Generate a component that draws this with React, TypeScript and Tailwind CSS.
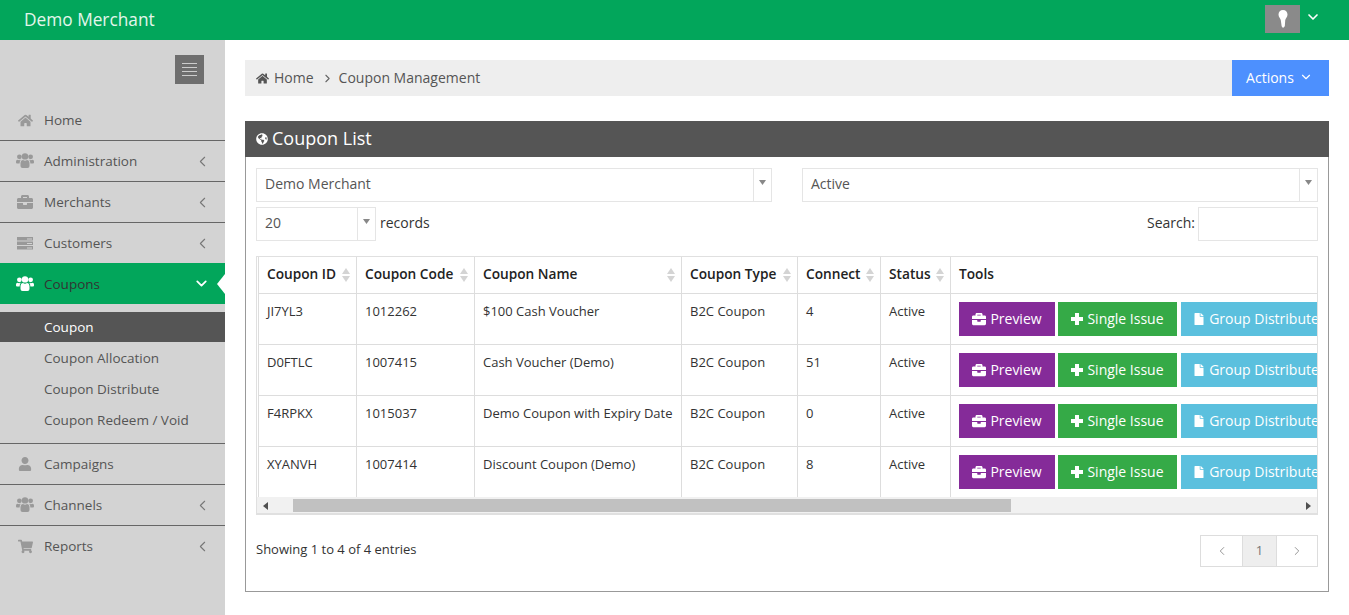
import { ReactNode } from 'react';
import { ChevronDown, ChevronLeft, ChevronRight } from 'lucide-react';
import { FaBriefcase, FaFile, FaGlobeAmericas, FaHome, FaShoppingCart, FaUser } from 'react-icons/fa';

const coupons = [
  { id: 'JI7YL3', code: '1012262', name: '$100 Cash Voucher', connect: '4' },
  { id: 'D0FTLC', code: '1007415', name: 'Cash Voucher (Demo)', connect: '51' },
  { id: 'F4RPKX', code: '1015037', name: 'Demo Coupon with Expiry Date', connect: '0' },
  { id: 'XYANVH', code: '1007414', name: 'Discount Coupon (Demo)', connect: '8' },
];

const columns = [
  { label: 'Coupon ID', width: 'w-[98px]' },
  { label: 'Coupon Code', width: 'w-[118px]' },
  { label: 'Coupon Name', width: 'w-[207px]' },
  { label: 'Coupon Type', width: 'w-[116px]' },
  { label: 'Connect', width: 'w-[83px]' },
  { label: 'Status', width: 'w-[70px]' },
];

function UsersIcon() {
  return (
    <svg width="18" height="16" viewBox="0 0 18 16" fill="currentColor">
      <circle cx="3.4" cy="3.8" r="2.4" />
      <circle cx="14.6" cy="3.8" r="2.4" />
      <circle cx="9" cy="3.4" r="3.2" />
      <path d="M4.500 10.500C4.500 8 5.700 7 7 7Q9 8.500 11 7C12.300 7 13.500 8 13.500 10.500V13Q13.500 15 11.500 15H6.500Q4.500 15 4.500 13Z" />
      <path d="M0 8.500Q0 6.700 1.500 6.700 3 7.600 4.800 6.700 3.700 7.800 3.600 10.500H1Q0 10.500 0 9.500Z" />
      <path d="M18 8.500Q18 6.700 16.500 6.700 15 7.600 13.200 6.700 14.300 7.800 14.400 10.500H17Q18 10.500 18 9.500Z" />
    </svg>
  );
}

function RacksIcon() {
  return (
    <svg width="16" height="13" viewBox="0 0 16 13" fill="currentColor">
      <rect width="16" height="3.500" />
      <rect y="4.500" width="16" height="3.500" />
      <rect y="9" width="16" height="3.500" />
      <rect x="10" y="1.500" width="5" height="1" fill="#d3d3d3" />
      <rect x="10" y="6" width="5" height="1" fill="#d3d3d3" />
      <rect x="10" y="10.500" width="5" height="1" fill="#d3d3d3" />
    </svg>
  );
}

function NavItem({ icon, label, arrow = true }: { icon: ReactNode; label: string; arrow?: boolean }) {
  return (
    <div className="flex h-[41px] items-center border-b border-[#666] pl-[15px] pr-[14px] text-[13.5px] text-[#555]">
      <span className="mr-[9px] flex w-[20px] shrink-0 items-center justify-center text-[#999]">{icon}</span>
      <span className="flex-1">{label}</span>
      {arrow && <ChevronLeft className="h-[17px] w-[17px] text-[#777]" strokeWidth={1.5} />}
    </div>
  );
}

function SortArrows() {
  return (
    <svg width="8" height="16" viewBox="0 0 8 16" className="shrink-0 fill-[#d4d4d4]">
      <path d="M4 1 8 7H0Z" />
      <path d="M4 15 8 9H0Z" />
    </svg>
  );
}

function Caret() {
  return (
    <svg width="7" height="5" viewBox="0 0 7 5" className="fill-[#888]">
      <path d="M0 0h7L3.500 5Z" />
    </svg>
  );
}

function SelectBox({ value, className }: { value: string; className: string }) {
  return (
    <div className={`flex h-[34px] items-center border border-[#e5e5e5] text-[14px] text-[#555] ${className}`}>
      <span className="flex-1 pb-[3px] pl-[8px]">{value}</span>
      <span className="flex h-full w-[18px] items-center justify-center border-l border-[#e5e5e5] pb-[5px]">
        <Caret />
      </span>
    </div>
  );
}

function ToolButton({ color, icon, label }: { color: string; icon: ReactNode; label: string }) {
  return (
    <span className={`flex h-[34px] shrink-0 items-center justify-center gap-[4px] text-[14px] text-white ${color}`}>
      {icon}
      {label}
    </span>
  );
}

export default function App() {
  return (
    <div className="flex h-[615px] flex-col overflow-hidden bg-white font-['Open_Sans',sans-serif] text-[13px] text-[#333]">
      {/* Header */}
      <header className="flex h-10 shrink-0 items-center justify-between bg-[#02a65b] pl-[24px] pr-[28px]">
        <span className="pb-px text-[17.3px] text-[#e4f6ec]">Demo Merchant</span>
        <div className="flex items-center gap-[5px] pb-[2px]">
          <div className="flex h-[28px] w-[35px] items-center justify-center bg-[#8a8a8a]">
            <svg width="12" height="18" viewBox="0 0 12 20" className="fill-white">
              <path d="M6 0C9 0 11 2 11 5 11 8 9 9 8.500 11L8 18 6 20 4.500 18 3.500 11C3 9 1 8 1 5 1 2 3 0 6 0Z" />
            </svg>
          </div>
          <ChevronDown className="mb-[4px] h-[16px] w-[16px] text-white" strokeWidth={2.5} />
        </div>
      </header>

      <div className="flex min-h-0 flex-1">
        {/* Sidebar */}
        <aside className="w-[225px] shrink-0 bg-[#d3d3d3]">
          <div className="flex h-[60px] justify-end pr-[21px] pt-[15px]">
            <div className="flex h-[29px] w-[29px] flex-col items-center justify-center gap-[3px] bg-[#6e6e6e]">
              <span className="h-px w-[15px] bg-[#ccc]" />
              <span className="h-px w-[15px] bg-[#ccc]" />
              <span className="h-px w-[15px] bg-[#ccc]" />
              <span className="h-px w-[15px] bg-[#ccc]" />
            </div>
          </div>
          <NavItem icon={<FaHome size={15} />} label="Home" arrow={false} />
          <NavItem icon={<UsersIcon />} label="Administration" />
          <NavItem icon={<FaBriefcase size={16} />} label="Merchants" />
          <div className="flex h-[40px] items-center pl-[15px] pr-[14px] text-[13.5px] text-[#555]">
            <span className="mr-[9px] flex w-[20px] shrink-0 items-center justify-center text-[#999]">
              <RacksIcon />
            </span>
            <span className="flex-1">Customers</span>
            <ChevronLeft className="h-[17px] w-[17px] text-[#777]" strokeWidth={1.5} />
          </div>
          <div className="relative flex h-[41px] items-center bg-[#02a65b] pl-[15px] pr-[15px] text-[13.5px] text-[#333]">
            <span className="mr-[9px] flex w-[20px] shrink-0 items-center justify-center text-white">
              <UsersIcon />
            </span>
            <span className="flex-1 pt-px">Coupons</span>
            <ChevronDown className="h-[17px] w-[17px] text-white" strokeWidth={2.5} />
            <span className="absolute right-0 top-[11px] h-0 w-0 border-y-[10px] border-r-[8px] border-y-transparent border-r-white" />
          </div>
          <div className="border-b border-[#666] pb-[8px] pt-[8px] text-[13.5px] text-[#555]">
            <div className="flex h-[30px] items-center bg-[#555] pl-[44px] text-white">Coupon</div>
            <div className="flex h-[31px] items-center pl-[44px] pt-px">Coupon Allocation</div>
            <div className="flex h-[31px] items-center pl-[44px] pt-px">Coupon Distribute</div>
            <div className="flex h-[31px] items-center pl-[44px] pt-px">Coupon Redeem / Void</div>
          </div>
          <NavItem icon={<FaUser size={14} />} label="Campaigns" arrow={false} />
          <NavItem icon={<UsersIcon />} label="Channels" />
          <div className="flex h-[41px] items-center pb-px pl-[15px] pr-[14px] text-[13.5px] text-[#555]">
            <span className="mr-[9px] flex w-[20px] shrink-0 items-center justify-center text-[#999]">
              <FaShoppingCart size={15} />
            </span>
            <span className="flex-1">Reports</span>
            <ChevronLeft className="h-[17px] w-[17px] text-[#777]" strokeWidth={1.5} />
          </div>
        </aside>

        {/* Main */}
        <main className="min-w-0 flex-1 pl-[20px] pr-[20px] pt-[20px]">
          <div className="flex h-[36px] items-center bg-[#eeeeee] pl-[11px] text-[14px] text-[#555]">
            <FaHome size={13} className="mr-[5px]" />
            <span className="pb-[2px]">Home</span>
            <ChevronRight className="ml-[7px] mr-[5px] h-[13px] w-[13px] text-[#666]" strokeWidth={2} />
            <span className="flex-1 pb-[2px]">Coupon Management</span>
            <span className="flex h-full w-[97px] items-center justify-center gap-[5px] bg-[#4d90fe] pb-[2px] pr-[2px] text-white">
              Actions
              <ChevronDown className="h-[14px] w-[14px]" strokeWidth={2} />
            </span>
          </div>

          <section className="mt-[25px] h-[471px] border border-t-0 border-[#999]">
            <div className="-mx-px flex h-[36px] items-center gap-[4px] bg-[#555] pb-px pl-[11px] text-[18px] text-white">
              <FaGlobeAmericas size={12} />
              Coupon List
            </div>
            <div className="px-[10px] pt-[11px]">
              <div className="flex justify-between">
                <SelectBox value="Demo Merchant" className="w-[516px]" />
                <SelectBox value="Active" className="w-[516px]" />
              </div>
              <div className="mt-[5px] flex items-center justify-between text-[14px] text-[#333]">
                <div className="flex items-center gap-[4px]">
                  <SelectBox value="20" className="w-[120px]" />
                  <span className="pb-[3px]">records</span>
                </div>
                <div className="flex items-center gap-[3px]">
                  <span className="pb-[3px]">Search:</span>
                  <div className="h-[34px] w-[120px] border border-[#e5e5e5]" />
                </div>
              </div>

              <div className="mt-[15px] h-[259px] overflow-hidden border border-b-2 border-[#e0e0e0]">
                <div className="ml-px h-[240px] overflow-hidden">
                  <table className="w-[1300px] table-fixed border-collapse">
                    <thead>
                      <tr className="h-[36px] text-[13.7px] text-[#222]">
                        {columns.map((c) => (
                          <th
                            key={c.label}
                            className={`border border-t-0 border-[#ddd] pl-[8px] pr-[6px] text-left font-semibold ${c.width}`}
                          >
                            <span className="flex items-center justify-between">
                              {c.label}
                              <SortArrows />
                            </span>
                          </th>
                        ))}
                        <th className="border border-t-0 border-[#ddd] pl-[8px] text-left font-semibold">Tools</th>
                      </tr>
                    </thead>
                    <tbody>
                      {coupons.map((c) => (
                        <tr key={c.id} className="h-[51px] align-top">
                          <td className="border border-[#ddd] px-[8px] pt-[8px]">{c.id}</td>
                          <td className="border border-[#ddd] px-[8px] pt-[8px]">{c.code}</td>
                          <td className="whitespace-nowrap border border-[#ddd] px-[8px] pt-[8px]">{c.name}</td>
                          <td className="border border-[#ddd] px-[8px] pt-[8px]">B2C Coupon</td>
                          <td className="border border-[#ddd] px-[8px] pt-[8px]">{c.connect}</td>
                          <td className="border border-[#ddd] px-[8px] pt-[8px]">Active</td>
                          <td className="border border-[#ddd] px-[8px] pt-[8px]">
                            <div className="flex">
                              <ToolButton
                                color="mr-[3px] w-[96px] bg-[#852b99]"
                                icon={<FaBriefcase size={14} />}
                                label="Preview"
                              />
                              <ToolButton
                                color="mr-[4px] w-[119px] bg-[#35aa47]"
                                icon={
                                  <svg width="12" height="12" viewBox="0 0 12 12" className="fill-white">
                                    <path d="M4 0h4v4h4v4H8v4H4V8H0V4h4Z" />
                                  </svg>
                                }
                                label="Single Issue"
                              />
                              <ToolButton
                                color="w-[150px] bg-[#5bc0de]"
                                icon={<FaFile size={12} />}
                                label="Group Distribute"
                              />
                            </div>
                          </td>
                        </tr>
                      ))}
                    </tbody>
                  </table>
                </div>
                <div className="flex h-[17px] items-center bg-[#f1f1f1]">
                  <span className="flex w-[36px] shrink-0 items-center pl-[6px]">
                    <svg width="5" height="8" viewBox="0 0 5 8" className="fill-[#505050]">
                      <path d="M5 0v8L0 4Z" />
                    </svg>
                  </span>
                  <span className="h-[13px] w-[718px] bg-[#c1c1c1]" />
                  <span className="flex flex-1 items-center justify-end pr-[6px]">
                    <svg width="5" height="8" viewBox="0 0 5 8" className="fill-[#505050]">
                      <path d="M0 0v8l5-4Z" />
                    </svg>
                  </span>
                </div>
              </div>

              <div className="mt-[20px] flex items-center justify-between">
                <span className="pb-[2px] text-[13px] text-[#333]">Showing 1 to 4 of 4 entries</span>
                <div className="flex h-[32px] border border-[#ddd] text-[#888]">
                  <span className="flex w-[41px] items-center justify-center">
                    <ChevronLeft className="h-[14px] w-[14px]" strokeWidth={1.5} />
                  </span>
                  <span className="flex w-[35px] items-center justify-center border-x border-[#ddd] bg-[#eee] text-[13px] text-[#777]">
                    1
                  </span>
                  <span className="flex w-[40px] items-center justify-center">
                    <ChevronRight className="h-[14px] w-[14px]" strokeWidth={1.5} />
                  </span>
                </div>
              </div>
            </div>
          </section>
        </main>
      </div>
    </div>
  );
}
